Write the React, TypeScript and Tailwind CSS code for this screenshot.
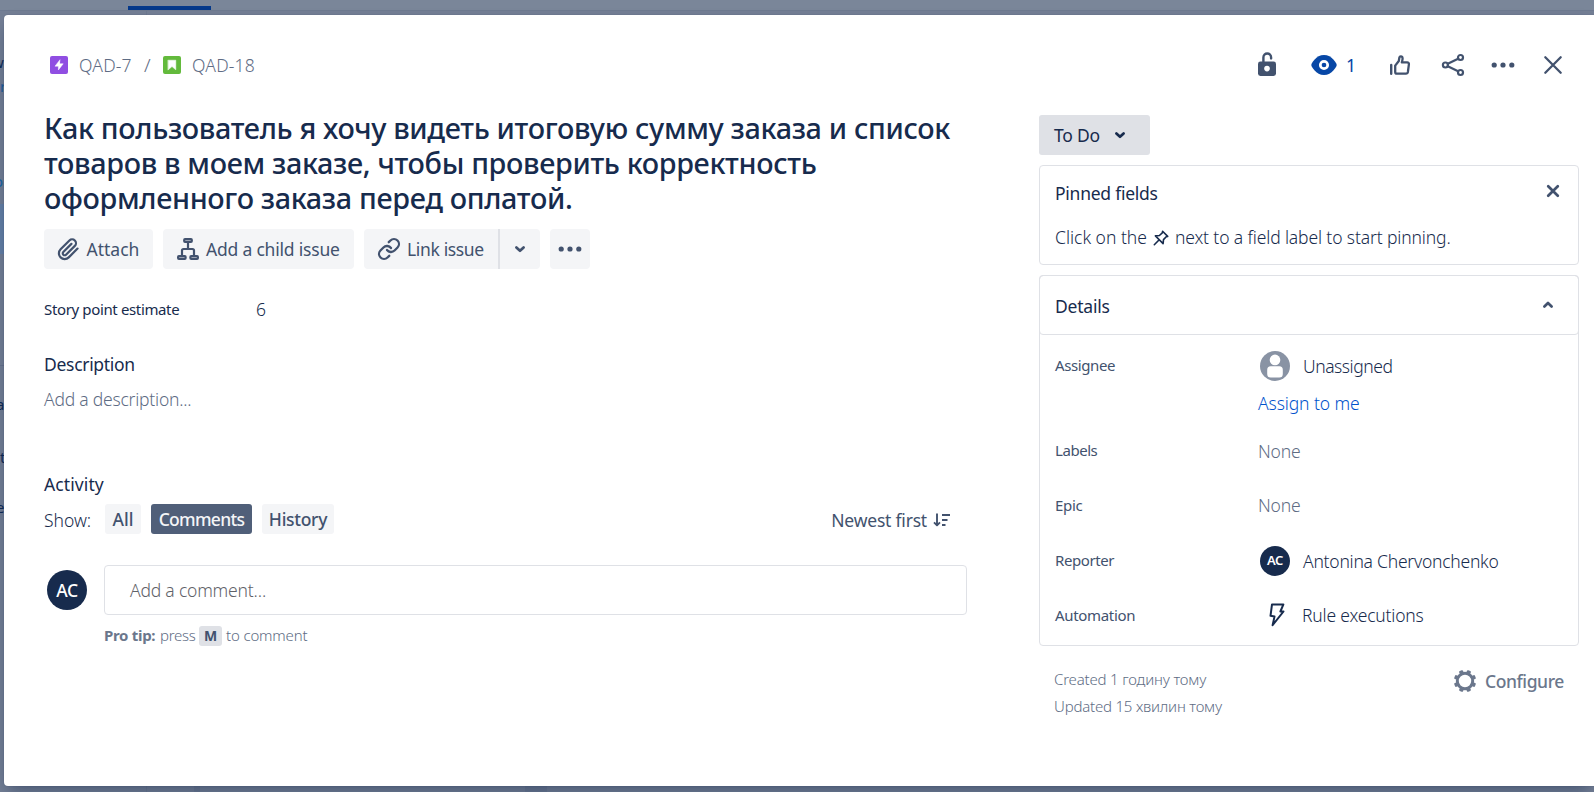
import type { ReactNode } from "react";

type IconProps = { children: ReactNode; w: number; h?: number; className?: string };

function Icon({ children, w, h = w, className = "" }: IconProps) {
  return (
    <svg
      width={w}
      height={h}
      viewBox={`0 0 ${w} ${h}`}
      fill="none"
      stroke="currentColor"
      strokeLinecap="round"
      strokeLinejoin="round"
      className={`shrink-0 ${className}`}
    >
      {children}
    </svg>
  );
}

function Chevron({ up = false, className = "" }: { up?: boolean; className?: string }) {
  return (
    <Icon w={12} className={className}>
      <path d={up ? "M2.4 7.5 6 4 9.6 7.5" : "M2.4 4.4 6 7.8 9.6 4.4"} strokeWidth="2.7" />
    </Icon>
  );
}

function Dots() {
  return (
    <Icon w={30}>
      <g fill="currentColor" stroke="none">
        <circle cx="6.2" cy="15" r="2.6" />
        <circle cx="15" cy="15" r="2.6" />
        <circle cx="23.8" cy="15" r="2.6" />
      </g>
    </Icon>
  );
}

function Breadcrumbs() {
  return (
    <nav className="flex items-center pl-1.5 font-light text-[#5e6c84]">
      <Icon w={18}>
        <rect width="18" height="18" rx="2" fill="#904ee2" stroke="none" />
        <path d="M9.8 4 5 10.2h3.4V14l4.8-6.2H9.8Z" fill="#fff" stroke="#fff" strokeWidth=".5" />
      </Icon>
      <a className="ml-[11px] w-[65px] tracking-[0.2px]">QAD-7</a>
      <span className="w-[19px] text-[19px]">/</span>
      <Icon w={18}>
        <rect width="18" height="18" rx="2" fill="#63ba3c" stroke="none" />
        <path d="M5.2 4.2h7.6v9.6L9 10.6l-3.8 3.2Z" fill="#fff" stroke="#fff" strokeWidth=".5" />
      </Icon>
      <a className="ml-[11px] tracking-[0.2px]">QAD-18</a>
    </nav>
  );
}

function HeaderActions() {
  return (
    <div className="flex items-center text-[#42526e]">
      <Icon w={30}>
        <path d="M11.4 12V7.4a3.85 3.85 0 0 1 7.7 0v1" strokeWidth="2.4" />
        <rect x="6" y="11.6" width="18" height="14.4" rx="2.4" fill="currentColor" stroke="none" />
        <circle cx="15" cy="18.6" r="2.8" fill="#fff" stroke="none" />
      </Icon>
      <Icon w={30} className="ml-[27px] text-[#0747a6]">
        <path d="M2.3 15c0-1.6 4.7-10 12.7-10s12.7 8.4 12.7 10-4.7 10-12.7 10S2.3 16.6 2.3 15Z" fill="currentColor" stroke="none" />
        <circle cx="15" cy="15" r="3.7" stroke="#fff" strokeWidth="2.7" />
      </Icon>
      <span className="ml-[7px] w-[10px] text-[#0747a6]">1</span>
      <Icon w={30} className="ml-[29px]">
        <path d="M6.2 15v8.7" strokeWidth="2.4" />
        <path
          d="M10.2 15.6 13.8 11l.6-3.6c.3-1.5 3.1-1.6 3.200.7.1 1.600-.4 3.100-.8 4.300h5.400c1.200 0 1.900.8 1.700 1.900l-1 7.600c-.2 1.200-.9 1.800-2 1.800H12c-1.100 0-1.800-.7-1.800-1.800Z"
          strokeWidth="2.3"
        />
      </Icon>
      <Icon w={30} className="ml-[23px]">
        <g strokeWidth="2.2">
          <circle cx="7.4" cy="15" r="2.5" />
          <circle cx="22.5" cy="7.5" r="2.5" />
          <circle cx="22.5" cy="22.5" r="2.5" />
          <path d="m9.8 13.8 10.3-5.1M9.8 16.2l10.3 5.1" />
        </g>
      </Icon>
      <span className="ml-5 flex">
        <Dots />
      </span>
      <Icon w={30} className="ml-5">
        <path d="m7.3 7.3 15.4 15.4M22.7 7.3 7.3 22.7" strokeWidth="2.3" />
      </Icon>
    </div>
  );
}

function Toolbar() {
  const base = "flex h-10 items-center rounded bg-[#f4f5f7] ";
  return (
    <div className="mt-[14px] flex gap-[10px] text-[#42526e]">
      <button className={base + "w-[109px] pl-[13px]"}>
        <svg width="23" height="23" viewBox="0 0 24 24" fill="none" stroke="currentColor" strokeWidth="2.3" strokeLinecap="round" strokeLinejoin="round">
          <path d="m21.44 11.05-9.19 9.19a6 6 0 0 1-8.49-8.49l9.19-9.19a4 4 0 0 1 5.66 5.66l-9.2 9.19a2 2 0 0 1-2.83-2.83l8.49-8.48" />
        </svg>
        <span className="ml-[6.5px]">Attach</span>
      </button>
      <button className={base + "w-[191px] pl-[13px]"}>
        <Icon w={24}>
          <g strokeWidth="2.2">
            <rect x="8.2" y="2.1" width="7.6" height="2.7" rx=".8" />
            <rect x="2.1" y="19.2" width="7.5" height="2.7" rx=".8" />
            <rect x="14.4" y="19.2" width="7.5" height="2.7" rx=".8" />
            <path d="M12 5v7M6 19v-5.5Q6 12 7.5 12h9q1.5 0 1.5 1.5V19" />
          </g>
        </Icon>
        <span className="ml-[6px] tracking-[-0.2px]">Add a child issue</span>
      </button>
      <div className="flex">
        <button className="flex h-10 w-[134px] items-center rounded-l bg-[#f4f5f7] pl-[13px]">
          <svg width="24" height="24" viewBox="0 0 24 24" fill="none" stroke="currentColor" strokeWidth="2.3" strokeLinecap="round" strokeLinejoin="round">
            <path d="M10 13a5 5 0 0 0 7.54.54l3-3a5 5 0 0 0-7.07-7.07l-1.72 1.71" />
            <path d="M14 11a5 5 0 0 0-7.54-.54l-3 3a5 5 0 0 0 7.07 7.07l1.71-1.71" />
          </svg>
          <span className="ml-[6px] tracking-[-0.35px]">Link issue</span>
        </button>
        <button className="flex h-10 w-[42px] items-center justify-center rounded-r border-l-2 border-[#dfe1e6] bg-[#f4f5f7]">
          <Chevron />
        </button>
      </div>
      <button className={base + "w-10 justify-center"}>
        <Dots />
      </button>
    </div>
  );
}

function Activity() {
  return (
    <section className="mt-[61px]">
      <h3 className="h-6 leading-6 tracking-[0.1px]">Activity</h3>
      <div className="mt-2 flex h-[30px] items-center">
        <span className="w-[61px] pt-[2px] font-light">Show:</span>
        <div className="flex h-[30px] gap-[10px] font-medium text-[#42526e]">
          <button className="w-9 rounded-[3px] bg-[#f4f5f7] tracking-[0.1px]">All</button>
          <button className="w-[101px] rounded-[3px] bg-[#505f79] tracking-[-0.7px] text-[#f4f5f7]">Comments</button>
          <button className="w-[72px] rounded-[3px] bg-[#f4f5f7] tracking-[-0.3px]">History</button>
        </div>
        <button className="mr-4 ml-auto flex items-center text-[#42526e]">
          <span className="pt-[2px] tracking-[-0.2px]">Newest first</span>
          <Icon w={18} h={14} className="mt-0.5 ml-[6px]">
            <g strokeWidth="1.9" strokeLinecap="butt">
              <path d="M4 .5v11M1 9.3l3 3 3-3" />
              <path d="M9 2h8M9 7h5.5M9 12h3.5" />
            </g>
          </Icon>
        </button>
      </div>
      <div className="mt-[31px] flex">
        <span className="mt-[5px] ml-[3px] flex h-10 w-10 items-center justify-center rounded-full bg-[#172b4d] font-medium tracking-[-0.3px] text-white">
          AC
        </span>
        <div className="ml-[17px] flex-1">
          <div className="flex h-[50px] items-center rounded border border-[#dfe1e6] pl-[25px] font-light tracking-[-0.2px] text-[#5f6269]">
            Add a comment…
          </div>
          <p className="mt-[11px] flex h-5 items-center text-[15px] leading-5 font-light text-[#5e6c84]">
            <b className="-mt-0.5 w-14 font-bold tracking-[-0.3px] text-[#6b778c]">Pro tip:</b>
            <span className="-mt-0.5 w-[39px] tracking-[-0.3px]">press</span>
            <kbd className="flex h-5 w-[23px] items-center justify-center rounded-[3px] bg-[#dfe1e6] font-['Noto_Sans',sans-serif] text-[14px] font-bold text-[#42526e]">
              M
            </kbd>
            <span className="-mt-0.5 ml-1 tracking-[-0.15px]">to comment</span>
          </p>
        </div>
      </div>
    </section>
  );
}

function Row({ label, children }: { label: ReactNode; children: ReactNode }) {
  return (
    <div className="mt-[15px] flex h-10 items-center">
      <div className="-mt-0.5 w-[200px] text-[15px] text-[#42526e]">{label}</div>
      {children}
    </div>
  );
}

function Sidebar() {
  return (
    <aside className="mt-[30px] w-[540px]">
      <button className="flex h-10 w-[111px] items-center rounded-[3px] bg-[#dfe1e6] pl-[15px]">
        <span className="tracking-[-0.2px]">To Do</span>
        <Chevron className="ml-[14px]" />
      </button>

      <section className="mt-[10px] h-[100px] rounded border border-[#dfe1e6] px-[15px]">
        <div className="flex h-[55px] items-center justify-between">
          <h3 className="tracking-[-0.25px]">Pinned fields</h3>
          <Icon w={20} className="-mt-1.5 text-[#42526e]">
            <path d="m5.2 5.2 9.6 9.6M14.8 5.2l-9.6 9.6" strokeWidth="2.7" />
          </Icon>
        </div>
        <p className="flex h-[32px] items-center font-light">
          <span>Click on the</span>
          <Icon w={16} className="mt-px ml-1.5">
            <path
              d="m9.6 1.3 5.1 5.1-1.5.3-2.7 2.9-.4 4-7.7-7.7 4-.4 2.9-2.7ZM6.2 9.8l-4.9 4.9"
              strokeWidth="1.6"
            />
          </Icon>
          <span className="ml-[6px] tracking-[-0.13px]">next to a field label to start pinning.</span>
        </p>
      </section>

      <section className="mt-[10px] rounded border border-[#dfe1e6]">
        <header className="-mx-px -mt-px flex h-[60px] items-center justify-between rounded border border-[#dfe1e6] pr-[24px] pl-[15px]">
          <h3 className="pt-[2px] tracking-[-0.2px]">Details</h3>
          <Chevron up className="text-[#42526e]" />
        </header>
        <div className="h-[310px] pl-[15px]">
          <div className="flex h-[81px]">
            <div className="mt-[19px] w-[200px] text-[15px] leading-[22px] tracking-[-0.4px] text-[#42526e]">Assignee</div>
            <div className="mt-[16px] font-light">
              <div className="flex items-center">
                <Icon w={30} className="ml-[5px]">
                  <g stroke="none">
                    <circle cx="15" cy="15" r="15" fill="#8993a4" />
                    <circle cx="15" cy="8.9" r="5.3" fill="#fff" />
                    <rect x="7.2" y="15.3" width="15.6" height="11.2" rx="3.5" fill="#fff" />
                  </g>
                </Icon>
                <span className="ml-[13px] tracking-[-0.45px]">Unassigned</span>
              </div>
              <a className="mt-[10px] ml-[3px] block h-6 leading-6 tracking-[-0.1px] text-[#0052cc]">Assign to me</a>
            </div>
          </div>
          <Row label={<span className="tracking-[-0.45px]">Labels</span>}>
            <span className="ml-[3px] font-light tracking-[-0.17px] text-[#5e6c84]">None</span>
          </Row>
          <Row label={<span className="tracking-[-0.3px]">Epic</span>}>
            <span className="ml-[3px] pb-px font-light tracking-[-0.17px] text-[#5e6c84]">None</span>
          </Row>
          <Row label={<span className="tracking-[-0.4px]">Reporter</span>}>
            <span className="ml-[5px] flex h-[30px] w-[30px] items-center justify-center rounded-full bg-[#172b4d] text-[13px] font-semibold tracking-[-0.3px] text-white">
              AC
            </span>
            <span className="ml-[13px] font-light tracking-[-0.24px]">Antonina Chervonchenko</span>
          </Row>
          <Row label={<span className="tracking-[-0.33px]">Automation</span>}>
            <Icon w={16} h={24} className="-mt-0.5 ml-[14px]">
              <path d="M3 1.4h11.4l-3 7.1h3.100L3.600 22.200l1.900-8.600-4-.8Z" strokeWidth="2" />
            </Icon>
            <span className="ml-[17px] pb-[2px] font-light tracking-[-0.19px]">Rule executions</span>
          </Row>
        </div>
      </section>

      <footer className="mt-5 flex justify-between pl-[15px] text-[#6b778c]">
        <div className="text-[15px] leading-[27px] font-light text-[#5e6c84]">
          <div className="tracking-[-0.18px]">Created 1 годину тому</div>
          <div className="tracking-[-0.2px]">Updated 15 хвилин тому</div>
        </div>
        <button className="mr-[15px] flex h-[30px] items-center font-medium">
          <Icon w={24}>
            <circle cx="12" cy="12" r="7.7" strokeWidth="3" />
            <g fill="currentColor" stroke="none">
              {[22.5, 67.5, 112.5, 157.5, 202.5, 247.5, 292.5, 337.5].map((a) => (
                <rect key={a} x="9.900" y=".8" width="4.200" height="3.600" rx="1.100" transform={`rotate(${a} 12 12)`} />
              ))}
            </g>
          </Icon>
          <span className="ml-[8px] tracking-[-0.4px]">Configure</span>
        </button>
      </footer>
    </aside>
  );
}

function Backdrop() {
  return (
    <div className="flex h-full flex-col bg-[#747f95] text-[15px]">
      <div className="flex h-[11px] items-end border-b border-[#6d7990] bg-[#7a8699]">
        <div className="ml-[128px] h-1 w-[83px] bg-[#04388a]" />
      </div>
      <div className="flex flex-1">
        <div className="w-1 overflow-hidden text-[#0f2a55]">
          <div className="mt-[41px] h-5 -translate-x-2 leading-5">w</div>
          <div className="mt-1 h-5 leading-5 text-[#1d5c9c]">r</div>
          <div className="mt-[75px] h-5 -translate-x-1.5 leading-5 text-[#1664a8]">o</div>
          <div className="mt-[13px] h-[50px] bg-[#6580a6]" />
          <div className="mt-[111px] h-px bg-[#67738c]" />
          <div className="mt-[28px] h-5 -translate-x-1 leading-5">a</div>
          <div className="mt-[33px] h-5 leading-5">t</div>
          <div className="mt-[30px] h-5 -translate-x-1 leading-5">e</div>
        </div>
        <div className="ml-[142px] w-px bg-[#6d7990]" />
        <div className="ml-[47px] h-[6px] w-[6px] self-end bg-[#6c7890]" />
        <div className="ml-[325px] h-[6px] w-[22px] self-end bg-[#6c7890]" />
      </div>
    </div>
  );
}

export default function App() {
  return (
    <div className="relative h-screen w-full overflow-hidden font-['Noto_Sans',sans-serif] text-[17.5px] text-[#172b4d]">
      <Backdrop />
      <main className="absolute top-[15px] right-0 bottom-[6px] left-1 rounded-l bg-white pl-10 shadow-[0_0_1px_rgba(9,30,66,0.31),0_8px_16px_-4px_rgba(9,30,66,0.45)]">
        <header className="mt-[30px] flex h-10 items-center justify-between pr-[26px]">
          <Breadcrumbs />
          <HeaderActions />
        </header>
        <div className="flex justify-between pr-[15px]">
          <div className="w-[923px] pt-[25px]">
            <h1 className="text-[28.8px] leading-[35px] font-medium tracking-[-0.34px] whitespace-nowrap">
              Как пользователь я хочу видеть итоговую сумму заказа и список
              <br />
              товаров в моем заказе, чтобы проверить корректность
              <br />
              оформленного заказа перед оплатой.
            </h1>
            <Toolbar />
            <div className="mt-5 flex h-10 items-center">
              <span className="w-[212px] text-[15px] tracking-[-0.36px]">Story point estimate</span>
              <span className="font-light">6</span>
            </div>
            <h3 className="mt-[23px] h-6 leading-6 tracking-[-0.3px]">Description</h3>
            <p className="mt-[11px] h-6 leading-6 font-light tracking-[-0.22px] text-[#5e6c84]">Add a description...</p>
            <Activity />
          </div>
          <Sidebar />
        </div>
      </main>
    </div>
  );
}
